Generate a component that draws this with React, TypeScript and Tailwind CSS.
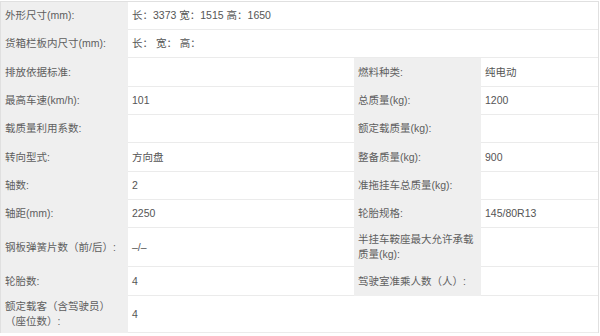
import React from "react";

type Row = {
  h: string;
  label: React.ReactNode;
  value?: React.ReactNode;
  label2?: React.ReactNode;
  value2?: React.ReactNode;
  wide?: boolean;
};

const rows: Row[] = [
  { h: "h-[28px]", label: "外形尺寸(mm):", value: "长：3373 宽：1515 高：1650", wide: true },
  { h: "h-[28px]", label: "货箱栏板内尺寸(mm):", value: "长： 宽： 高：", wide: true },
  { h: "h-[29px]", label: "排放依据标准:", value: "", label2: "燃料种类:", value2: "纯电动" },
  { h: "h-[28px]", label: "最高车速(km/h):", value: "101", label2: "总质量(kg):", value2: "1200" },
  { h: "h-[28px]", label: "载质量利用系数:", value: "", label2: "额定载质量(kg):", value2: "" },
  { h: "h-[29px]", label: "转向型式:", value: "方向盘", label2: "整备质量(kg):", value2: "900" },
  { h: "h-[28px]", label: "轴数:", value: "2", label2: "准拖挂车总质量(kg):", value2: "" },
  { h: "h-[28px]", label: "轴距(mm):", value: "2250", label2: "轮胎规格:", value2: "145/80R13" },
  {
    h: "h-[39px]",
    label: "钢板弹簧片数（前/后）:",
    value: "–/–",
    label2: (
      <>
        半挂车鞍座最大允许承载
        <br />
        质量(kg):
      </>
    ),
    value2: "",
  },
  { h: "h-[29px]", label: "轮胎数:", value: "4", label2: "驾驶室准乘人数（人）:", value2: "" },
  {
    h: "h-[37px]",
    label: (
      <>
        额定载客（含驾驶员）
        <br />
        （座位数）:
      </>
    ),
    value: "4",
    wide: true,
  },
];

function LabelCell({ children, h }: { children: React.ReactNode; h: string }) {
  return (
    <div className={`${h} flex items-center pl-1 bg-[#efefef] border-b border-[#efefef] leading-[15px] text-[#5e5e5e]`}>
      <span>{children}</span>
    </div>
  );
}

function ValueCell({ children, h, wide }: { children: React.ReactNode; h: string; wide?: boolean }) {
  return (
    <div
      className={`${h} ${wide ? "col-span-3" : ""} flex items-center pl-1 bg-white border-b border-[#ebebeb] leading-[15px] text-[#555] whitespace-pre`}
    >
      <span>{children}</span>
    </div>
  );
}

export default function App() {
  return (
    <div className="w-[600px] h-[336px] bg-white overflow-hidden">
      <div
        className="mt-px w-[599px] grid grid-cols-[127px_226px_127px_1fr] border-t border-r border-l border-[#e0e0e0] text-[10.5px]"
        style={{ fontFamily: '"Liberation Sans", "Noto Sans CJK SC", sans-serif' }}
      >
        {rows.map((r, i) => (
          <React.Fragment key={i}>
            <LabelCell h={r.h}>{r.label}</LabelCell>
            <ValueCell h={r.h} wide={r.wide}>
              {r.value}
            </ValueCell>
            {!r.wide && (
              <>
                <LabelCell h={r.h}>{r.label2}</LabelCell>
                <ValueCell h={r.h}>{r.value2}</ValueCell>
              </>
            )}
          </React.Fragment>
        ))}
      </div>
    </div>
  );
}
